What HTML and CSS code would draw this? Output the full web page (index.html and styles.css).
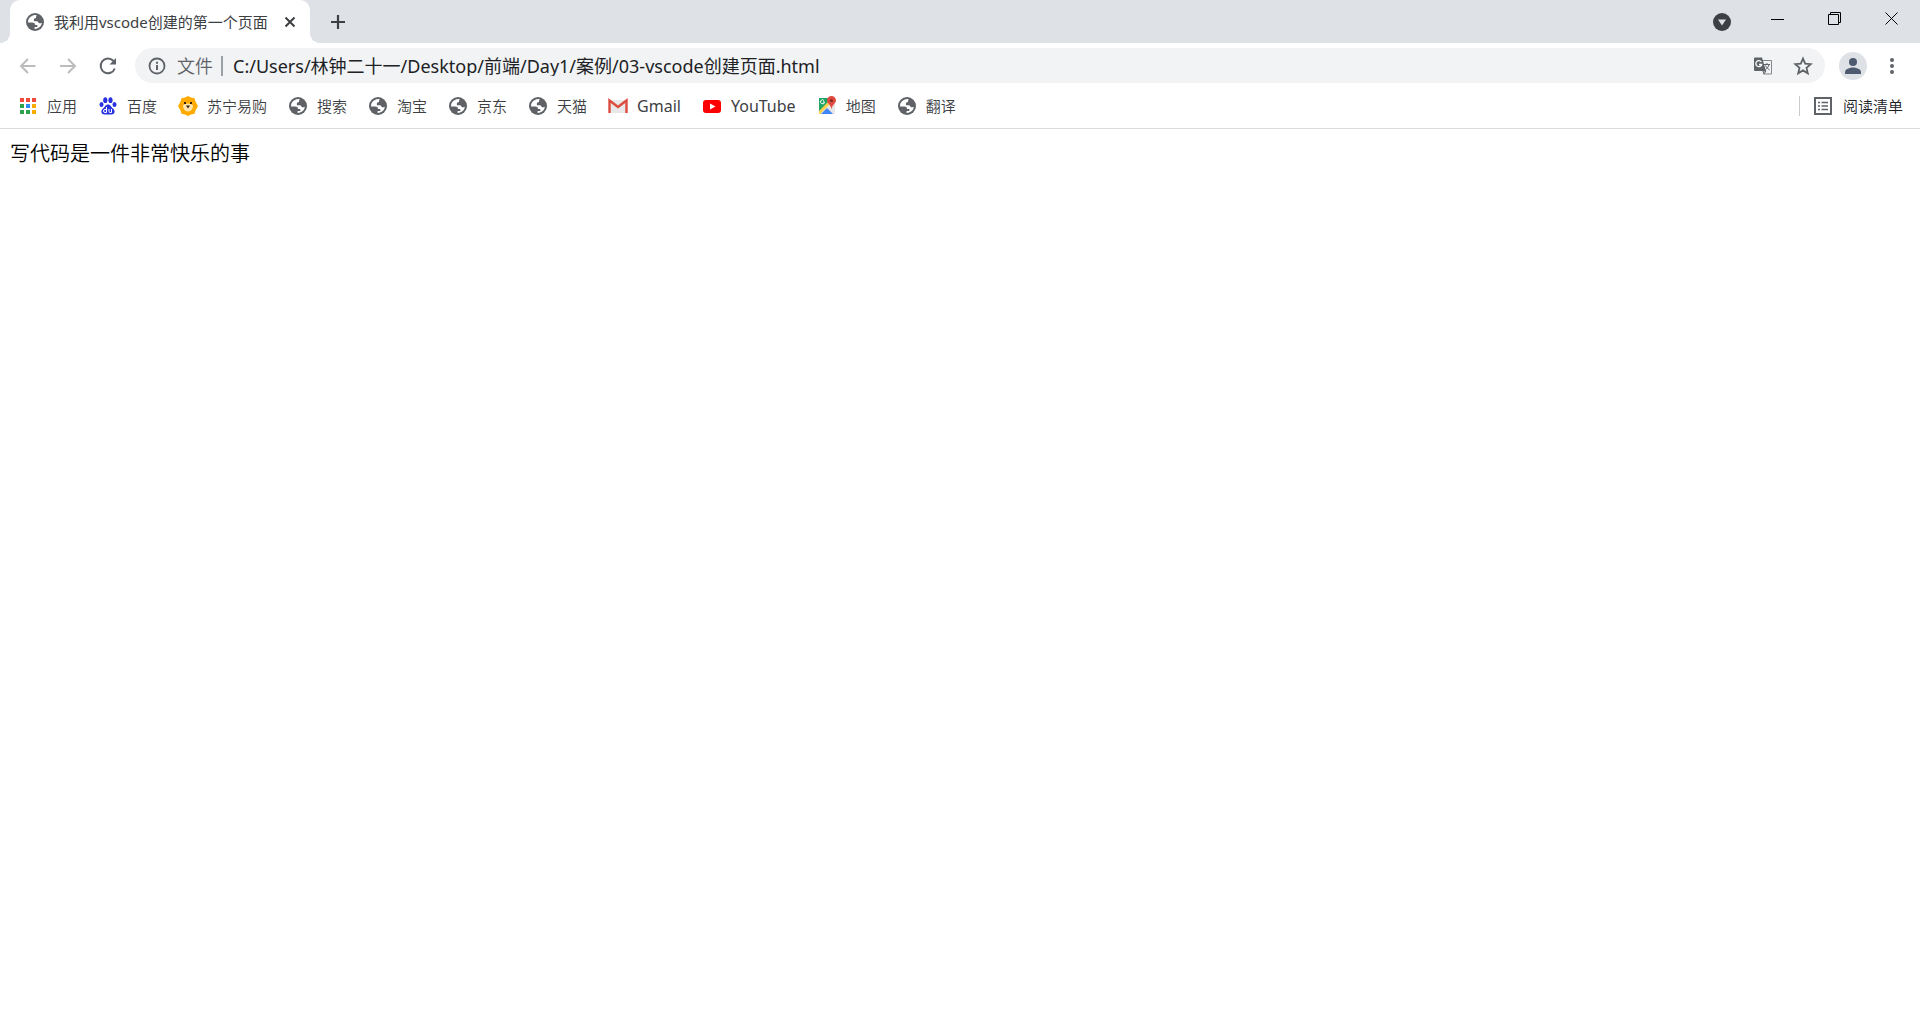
FILE: index.html
```html
<!DOCTYPE html>
<html lang="zh-CN">
<head>
<meta charset="utf-8">
<title>我利用vscode创建的第一个页面</title>
<link rel="stylesheet" href="styles.css">
</head>
<body>
<svg class="defs" aria-hidden="true">
  <symbol id="globe" viewBox="0 0 18 18">
    <circle cx="9" cy="9" r="9" fill="#5f6368"/>
    <path d="M10.600 2.200 C7.800 1.600 4 3.200 2.400 6.600 C2 8 2 9 2.200 9.600 H6.200 C8 9.600 9 10.400 9 12 H11.300 V14 H8.600 V15.900 C12.500 16.100 15.500 13.200 15.900 9.800 C15.200 10.400 14.200 10.500 13.200 10.200 C12 9.800 12.200 8.200 10.900 8.200 H8 C7.400 6 8.400 5 10 5 C10 3.800 10.200 2.900 10.600 2.200Z" fill="#fff"/>
  </symbol>
</svg>
<header class="chrome">
  <div class="titlebar">
    <div class="tab">
      <svg class="fav"><use href="#globe"/></svg>
      <span class="tab-title">我利用vscode创建的第一个页面</span>
      <button class="plain close" aria-label="关闭标签页"><svg width="12" height="12" viewBox="0 0 12 12"><path d="M1.500 1.500l9 9m0-9l-9 9" stroke="#3c4043" stroke-width="2" fill="none"/></svg></button>
    </div>
    <button class="plain newtab" aria-label="新标签页"><svg width="16" height="16" viewBox="0 0 16 16"><path d="M8 1v14M1 8h14" stroke="#3c4043" stroke-width="2.200"/></svg></button>
    <div class="window-controls">
      <button class="plain search" aria-label="搜索标签页"><svg width="18" height="18" viewBox="0 0 18 18"><circle cx="9" cy="9" r="9" fill="#3c4043"/><path d="M5 6.500h8L9 12.500z" fill="#dee1e6"/></svg></button>
      <button class="plain win" aria-label="最小化"><svg width="14" height="14" viewBox="0 0 14 14"><path d="M0 7.500h13" stroke="#000"/></svg></button>
      <button class="plain win" aria-label="还原"><svg width="14" height="14" viewBox="0 0 14 14"><path d="M.5 2.500h10v10H.5zM2.500 2.500v-2h10v10h-2" stroke="#000" fill="none"/></svg></button>
      <button class="plain win" aria-label="关闭"><svg width="14" height="14" viewBox="0 0 14 14"><path d="M.5.5l12 12m0-12l-12 12" stroke="#000"/></svg></button>
    </div>
  </div>
  <div class="toolbar">
    <button class="plain nav" aria-label="后退"><svg width="20" height="20" viewBox="0 0 20 20"><path d="M17.500 10H3.500M10 3l-7 7 7 7" stroke="#babcbe" stroke-width="2" fill="none"/></svg></button>
    <button class="plain nav" aria-label="前进"><svg width="20" height="20" viewBox="0 0 20 20"><path d="M2 10h14M10 3l7 7-7 7" stroke="#babcbe" stroke-width="2" fill="none"/></svg></button>
    <button class="plain nav" aria-label="重新加载"><svg width="20" height="20" viewBox="0 0 20 20"><path d="M16.800 12.500A7.300 7.300 0 1 1 15.200 4.800L17 6.600" stroke="#5f6368" stroke-width="2" fill="none"/><path d="M18 2v6.500h-6.500z" fill="#5f6368"/></svg></button>
    <div class="omnibox">
      <svg width="18" height="18" viewBox="0 0 18 18"><circle cx="9" cy="9" r="7.500" stroke="#5f6368" stroke-width="1.800" fill="none"/><path d="M9 8v5M9 4.800v2" stroke="#5f6368" stroke-width="2"/></svg>
      <label class="scheme" for="url">文件</label>
      <input id="url" class="url" type="text" value="C:/Users/林钟二十一/Desktop/前端/Day1/案例/03-vscode创建页面.html">
      <button class="plain" aria-label="翻译此页"><svg width="20" height="20" viewBox="0 0 20 20"><path d="M8 4.500h10.500v13.500h-8" stroke="#85888c" fill="#f1f3f4"/><path d="M2 1.500h7l4 13.500H2a1 1 0 0 1-1-1V2.500a1 1 0 0 1 1-1z" fill="#5f6368"/><path d="M8.300 6A3 3 0 1 0 8.700 8.500H6" stroke="#fff" stroke-width="1.300" fill="none"/><path d="M11 8.500h6M14 7v1.500M16 8.500c-.5 2.500-2 4-3.500 5M12.500 9.500c1 2 2.300 3.300 4 4.300M10 15l1 3 2-3z" stroke="#5f6368" fill="none"/></svg></button>
      <button class="plain" aria-label="为此标签页添加书签"><svg width="20" height="20" viewBox="0 0 20 20"><path d="M10 2.600l2.200 5.100 5.500.5-4.200 3.700 1.300 5.400L10 14.400l-4.800 2.900 1.300-5.400-4.200-3.700 5.500-.5z" stroke="#5f6368" stroke-width="1.800" fill="none"/></svg></button>
    </div>
    <button class="plain avatar" aria-label="用户"><svg width="28" height="28" viewBox="0 0 28 28"><circle cx="14" cy="14" r="14" fill="#dee1e6"/><circle cx="14" cy="10" r="4" fill="#4e5a70"/><path d="M6 22v-2c0-3 5-4.500 8-4.500s8 1.500 8 4.500v2z" fill="#4e5a70"/></svg></button>
    <button class="plain menu" aria-label="菜单"><svg width="6" height="18" viewBox="0 0 6 18"><g fill="#5f6368"><circle cx="3" cy="3" r="2"/><circle cx="3" cy="9" r="2"/><circle cx="3" cy="15" r="2"/></g></svg></button>
  </div>
  <nav class="bookmarks">
    <a href="#"><svg width="20" height="20" viewBox="-1 -1 20 20"><path d="M1 1h4v4H1zM7 1h4v4H7zM13 1h4v4h-4z" fill="#f04a3e"/><path d="M1 7h4v4H1zM1 13h4v4H1z" fill="#2ba24c"/><path d="M7 7h4v4H7z" fill="#2a8cf4"/><path d="M13 7h4v4h-4zM13 13h4v4h-4z" fill="#f9ab00"/><path d="M7 13h4v4H7z" fill="#2ba24c"/></svg>应用</a>
    <a href="#"><svg width="20" height="20" viewBox="-1 -1 20 20"><g fill="#2932e1"><ellipse cx="6.300" cy="3.200" rx="2.100" ry="2.900"/><ellipse cx="11.500" cy="3.200" rx="2.100" ry="2.900"/><ellipse cx="2.500" cy="7.500" rx="2" ry="2.600"/><ellipse cx="15.500" cy="7.500" rx="2" ry="2.600"/><path d="M9 7.500c2.500 0 3 2.500 5 4 3 2.500 1.500 6-1.500 6h-7c-3 0-4.500-3.500-1.500-6 2-1.500 2.500-4 5-4z"/></g><path d="M7.500 10v5.500H6a1.400 1.400 0 0 1 0-3h1.500M10 12v2.500q0 1 1 1h1.500V12" stroke="#fff" fill="none"/></svg>百度</a>
    <a href="#"><svg width="20" height="20" viewBox="0 0 20 20"><path d="M10 0l3 1.500 3.500.8 1 3.200L20 10l-2.500 4.500-1 3.200-3.500.8-3 1.500-3-1.500-3.500-.8-1-3.200L0 10l2.500-4.500 1-3.200L7 1.500z" fill="#ffaa01"/><path d="M5 9q5-3 10 0 0 6-5 6.500Q5 15 5 9z" fill="#ffe4ae"/><path d="M8 9.500h4l-2 3zM6 6h2v2H6zM12 6h2v2h-2z" fill="#38200c"/></svg>苏宁易购</a>
    <a href="#"><svg class="fav"><use href="#globe"/></svg>搜索</a>
    <a href="#"><svg class="fav"><use href="#globe"/></svg>淘宝</a>
    <a href="#"><svg class="fav"><use href="#globe"/></svg>京东</a>
    <a href="#"><svg class="fav"><use href="#globe"/></svg>天猫</a>
    <a href="#" class="latin"><svg width="20" height="20" viewBox="0 0 20 20"><path d="M2 4h16v13H2z" fill="#e8e8e8"/><path d="M1.500 17V4.500L10 11l8.500-6.500V17" stroke="#dd4b3e" stroke-width="2.400" fill="none"/></svg>Gmail</a>
    <a href="#" class="latin"><svg width="20" height="20" viewBox="0 0 20 20"><rect x="1" y="4" width="18" height="13" rx="3" fill="#f00"/><path d="M8 7.500l5.500 3-5.500 3z" fill="#fff"/></svg>YouTube</a>
    <a href="#"><svg width="20" height="20" viewBox="0 0 20 20"><path d="M2 2h14v16H2z" fill="#1fa463"/><path d="M2 18L16 4h2v14z" fill="#e6e6e6"/><path d="M4 18l6-6 6 6z" fill="#4285f4"/><path d="M2 15l9-9 2 2L3 18H2z" fill="#ffd04b"/><path d="M14.500 0a4.500 4.500 0 0 1 4.500 4.500c0 3-4 4-4.500 9-.5-5-4.500-6-4.500-9A4.500 4.500 0 0 1 14.500 0z" fill="#e04a3f"/><circle cx="14.500" cy="4.500" r="1.600" fill="#852b24"/><path d="M7 4.500A2 2 0 1 0 7.500 6H6" stroke="#fff" fill="none"/></svg>地图</a>
    <a href="#"><svg class="fav"><use href="#globe"/></svg>翻译</a>
    <button class="plain reading"><svg width="18" height="18" viewBox="0 0 18 18"><path d="M1 1h16v16H1z" stroke="#5f6368" stroke-width="2" fill="none"/><path d="M4 5.500h2M4 9h2M4 12.500h2M7.500 5.500H14M7.500 9H14M7.500 12.500H14" stroke="#5f6368" stroke-width="1.500"/></svg>阅读清单</button>
  </nav>
</header>
<main class="page">写代码是一件非常快乐的事</main>
</body>
</html>
```
FILE: styles.css
```css
* { box-sizing: border-box; }
body {
  margin: 0;
  background: #fff;
  color: #3c4043;
  font: 400 15px/20px "Noto Sans", "Noto Sans CJK SC", sans-serif;
}
svg { display: block; flex: none; }
.defs { position: absolute; width: 0; height: 0; }
.fav { width: 18px; height: 18px; }
.plain {
  display: flex;
  align-items: center;
  justify-content: center;
  flex: none;
  padding: 0;
  border: 0;
  background: none;
  color: inherit;
  font: inherit;
}
.chrome { border-bottom: 1px solid #dadce0; }
.titlebar {
  display: flex;
  align-items: flex-start;
  height: 43px;
  padding-left: 10px;
  background: #dee1e6;
}
.tab {
  position: relative;
  display: flex;
  align-items: center;
  width: 300px;
  height: 43px;
  padding: 0 14px 0 16px;
  border-radius: 10px 10px 0 0;
  background: #fff;
}
.tab::before, .tab::after {
  content: "";
  position: absolute;
  bottom: 0;
  width: 10px;
  height: 10px;
}
.tab::before { right: 100%; background: radial-gradient(circle at 0 0, transparent 10px, #fff 10px); }
.tab::after { left: 100%; background: radial-gradient(circle at 100% 0, transparent 10px, #fff 10px); }
.tab-title { flex: 1; margin-left: 10px; white-space: nowrap; overflow: hidden; }
.newtab { width: 56px; height: 43px; }
.window-controls { display: flex; margin-left: auto; }
.search { width: 54px; height: 43px; }
.win { width: 57px; height: 37px; }
.toolbar { display: flex; align-items: center; height: 45px; padding: 0 25px 0 8px; }
.nav { width: 40px; height: 40px; }
.omnibox {
  display: flex;
  align-items: center;
  flex: 1;
  min-width: 0;
  height: 35px;
  margin-left: 7px;
  padding: 0 12px 0 13px;
  gap: 20px;
  border-radius: 18px;
  background: #f1f3f4;
  font-size: 18px;
}
.scheme { margin-left: -9px; padding-right: 8px; border-right: 2px solid #9aa0a6; color: #5f6368; font-weight: 350; }
.url {
  flex: 1;
  min-width: 0;
  margin-left: -10px;
  padding: 0;
  border: 0;
  outline: 0;
  background: none;
  color: #202124;
  font: inherit;
}
.avatar { width: 28px; margin-left: 14px; }
.menu { margin-left: 22px; }
.bookmarks { display: flex; align-items: center; height: 40px; padding: 0 17px 4px 18px; gap: 21px; font-weight: 350; }
.bookmarks a { display: flex; align-items: center; gap: 9px; color: inherit; text-decoration: none; white-space: nowrap; }
.bookmarks .latin { font-size: 16px; font-weight: 400; }
.bookmarks .fav { width: 20px; height: 18px; }
.reading { gap: 11px; height: 20px; margin-left: auto; padding-left: 14px; border-left: 1px solid #c8cacd; color: #202124; }
.page { padding: 11px 10px; color: #000; font-size: 20px; font-weight: 350; line-height: 28px; }
```
